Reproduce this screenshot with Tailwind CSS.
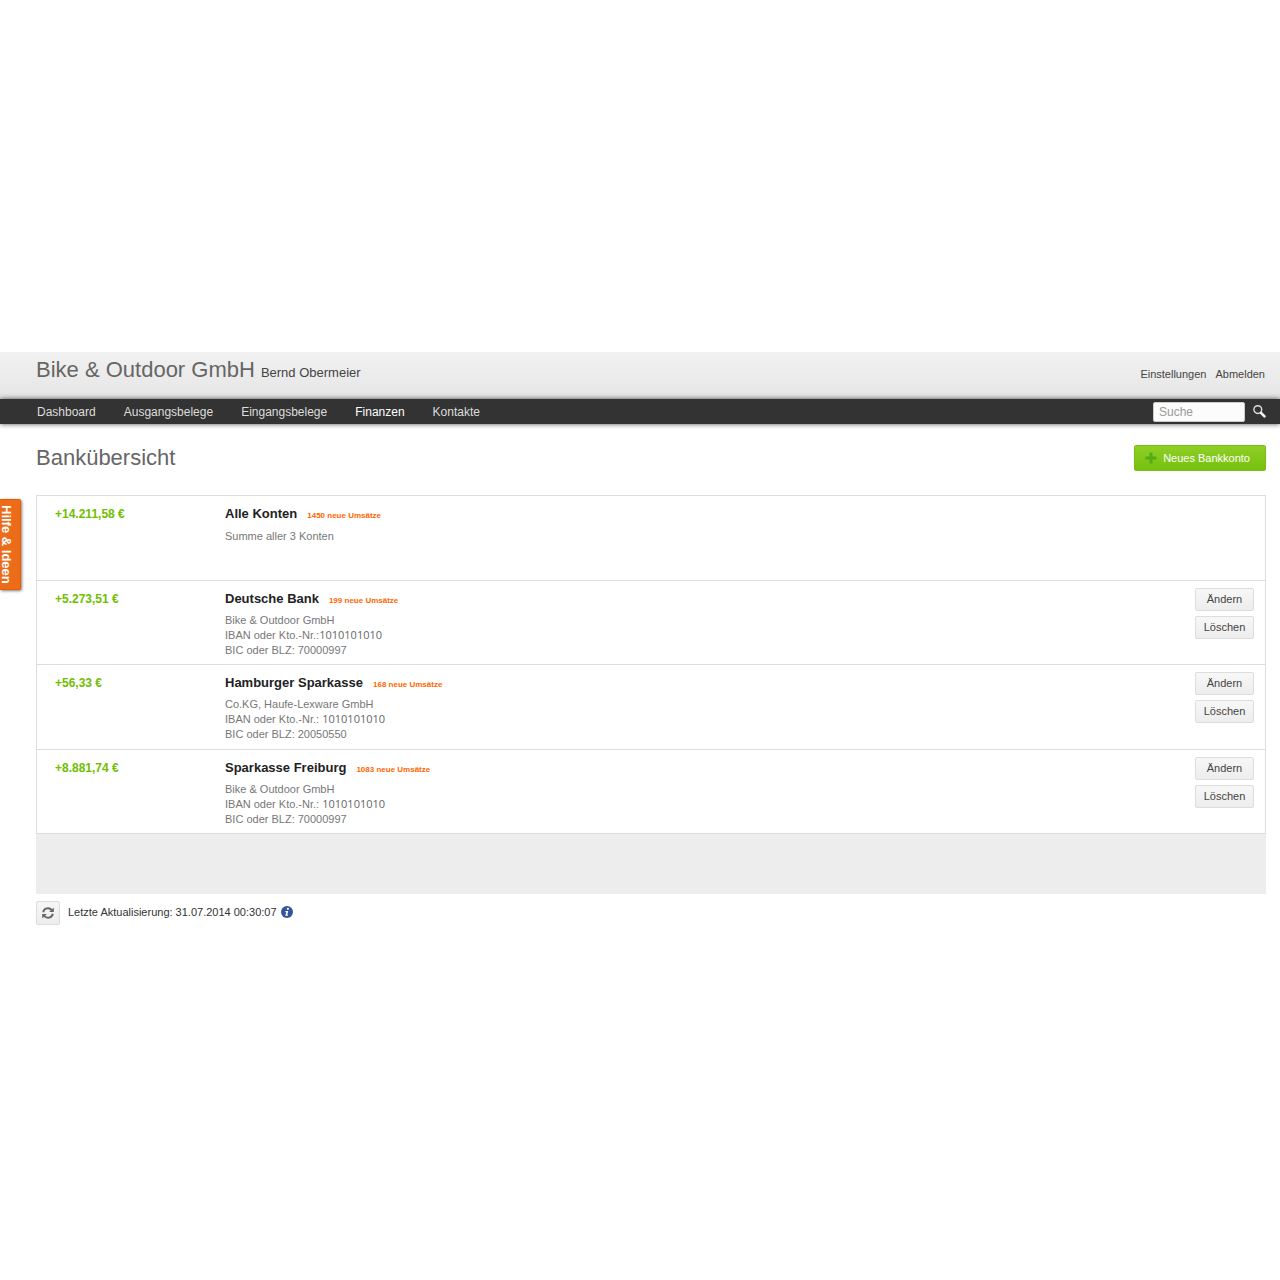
<!DOCTYPE html>
<html lang="de">
<head>
<meta charset="utf-8">
<meta name="viewport" content="width=device-width, initial-scale=1">
<title>Bankübersicht</title>
<script src="https://cdn.jsdelivr.net/npm/@tailwindcss/browser@4"></script>
</head>
<body class="min-h-screen bg-white pt-[352px] font-['Liberation_Sans',Arial,sans-serif] text-[11px] text-[#333]">
<div class="relative">
  <header class="flex h-[47px] items-start justify-between bg-linear-to-b from-[#f1f1f1] to-[#e6e6e6] pr-[15px] pl-9">
    <div class="flex items-baseline gap-[6px] pt-1">
      <span class="text-[22px] leading-7 text-[#666]">Bike &amp; Outdoor GmbH</span>
      <span class="text-[13px] text-[#444]">Bernd Obermeier</span>
    </div>
    <div class="flex gap-[9px] pt-[14px] leading-4 text-[#444]">
      <a href="#">Einstellungen</a>
      <a href="#">Abmelden</a>
    </div>
  </header>
  <nav class="relative flex h-[25px] items-center justify-between bg-[#333] pr-[14px] pl-[37px] shadow-[0_0_5px_rgba(0,0,0,0.7)]">
    <div class="flex gap-7 text-[12px] leading-4 text-[#ddd]">
      <a href="#">Dashboard</a>
      <a href="#">Ausgangsbelege</a>
      <a href="#">Eingangsbelege</a>
      <a href="#" class="text-white">Finanzen</a>
      <a href="#">Kontakte</a>
    </div>
    <form class="flex items-center gap-2">
      <input type="search" aria-label="Suche" placeholder="Suche" class="h-5 w-[92px] rounded-xs border border-[#ccc] bg-[#fcfcfc] px-[5px] text-[12px] placeholder:text-[#999]">
      <button type="button" aria-label="Suchen">
        <svg class="size-[13px]" viewBox="0 0 13 13" fill="none"><circle cx="4.8" cy="4.6" r="3.9" stroke="#e0e0e0" stroke-width="1.4"/><path d="M8 7.8 11.5 11.3" stroke="#f4f4f4" stroke-width="2.6" stroke-linecap="round"/></svg>
      </button>
    </form>
  </nav>
  <main class="pr-[14px] pl-9">
    <div class="flex items-center justify-between pt-[21px] pb-6">
      <h1 class="text-[22px] leading-[26px] text-[#666]">Bankübersicht</h1>
      <button type="button" class="flex h-[26px] items-center gap-[6px] rounded-xs border border-[#7cbd18] bg-linear-to-b from-[#8fcf26] to-[#76c00b] pr-[15px] pl-[10px] text-white">
        <svg class="size-3" viewBox="0 0 12 12"><path d="M4.5 0.5h3v4h4v3h-4v4h-3v-4h-4v-3h4z" fill="#55ab17"/></svg>
        Neues Bankkonto
      </button>
    </div>
    <ul class="border border-[#ddd] leading-[15px] text-[#777]">
      <li class="flex h-[84px] px-[18px] pt-[10px]">
        <strong class="w-[170px] shrink-0 text-[12px] leading-4 text-[#6fbe00]">+14.211,58 €</strong>
        <div class="grow">
          <h2 class="flex items-baseline gap-[10px] text-[13px] leading-4 font-bold text-[#222]">Alle Konten <a href="#" class="text-[8px] leading-none text-[#ff6600]">1450 neue Umsätze</a></h2>
          <p class="pt-[7px]">Summe aller 3 Konten</p>
        </div>
      </li>
      <li class="flex h-[84px] border-t border-[#ddd] pr-[11px] pl-[18px]">
        <strong class="w-[170px] shrink-0 pt-[10px] text-[12px] leading-4 text-[#6fbe00]">+5.273,51 €</strong>
        <div class="grow pt-[10px]">
          <h2 class="flex items-baseline gap-[10px] text-[13px] leading-4 font-bold text-[#222]">Deutsche Bank <a href="#" class="text-[8px] leading-none text-[#ff6600]">199 neue Umsätze</a></h2>
          <p class="pt-[6px]">Bike &amp; Outdoor GmbH<br>IBAN oder Kto.-Nr.:<span class="font-['Open_Sans',sans-serif] leading-none text-[#666]">1010101010</span><br>BIC oder BLZ: 70000997</p>
        </div>
        <div class="flex w-[59px] shrink-0 flex-col gap-[5px] pt-[7px] text-[#444]">
          <button type="button" class="h-[23px] rounded-xs border border-[#ddd] bg-linear-to-b from-[#f7f7f7] to-[#ededed]">Ändern</button>
          <button type="button" class="h-[23px] rounded-xs border border-[#ddd] bg-linear-to-b from-[#f7f7f7] to-[#ededed]">Löschen</button>
        </div>
      </li>
      <li class="flex h-[85px] border-t border-[#ddd] pr-[11px] pl-[18px]">
        <strong class="w-[170px] shrink-0 pt-[10px] text-[12px] leading-4 text-[#6fbe00]">+56,33 €</strong>
        <div class="grow pt-[10px]">
          <h2 class="flex items-baseline gap-[10px] text-[13px] leading-4 font-bold text-[#222]">Hamburger Sparkasse <a href="#" class="text-[8px] leading-none text-[#ff6600]">168 neue Umsätze</a></h2>
          <p class="pt-[6px]">Co.KG, Haufe-Lexware GmbH<br>IBAN oder Kto.-Nr.: <span class="font-['Open_Sans',sans-serif] leading-none text-[#666]">1010101010</span><br>BIC oder BLZ: 20050550</p>
        </div>
        <div class="flex w-[59px] shrink-0 flex-col gap-[5px] pt-[7px] text-[#444]">
          <button type="button" class="h-[23px] rounded-xs border border-[#ddd] bg-linear-to-b from-[#f7f7f7] to-[#ededed]">Ändern</button>
          <button type="button" class="h-[23px] rounded-xs border border-[#ddd] bg-linear-to-b from-[#f7f7f7] to-[#ededed]">Löschen</button>
        </div>
      </li>
      <li class="flex h-[84px] border-t border-[#ddd] pr-[11px] pl-[18px]">
        <strong class="w-[170px] shrink-0 pt-[10px] text-[12px] leading-4 text-[#6fbe00]">+8.881,74 €</strong>
        <div class="grow pt-[10px]">
          <h2 class="flex items-baseline gap-[10px] text-[13px] leading-4 font-bold text-[#222]">Sparkasse Freiburg <a href="#" class="text-[8px] leading-none text-[#ff6600]">1083 neue Umsätze</a></h2>
          <p class="pt-[6px]">Bike &amp; Outdoor GmbH<br>IBAN oder Kto.-Nr.: <span class="font-['Open_Sans',sans-serif] leading-none text-[#666]">1010101010</span><br>BIC oder BLZ: 70000997</p>
        </div>
        <div class="flex w-[59px] shrink-0 flex-col gap-[5px] pt-[7px] text-[#444]">
          <button type="button" class="h-[23px] rounded-xs border border-[#ddd] bg-linear-to-b from-[#f7f7f7] to-[#ededed]">Ändern</button>
          <button type="button" class="h-[23px] rounded-xs border border-[#ddd] bg-linear-to-b from-[#f7f7f7] to-[#ededed]">Löschen</button>
        </div>
      </li>
    </ul>
    <div class="h-[60px] bg-[#ededed]"></div>
    <div class="flex items-start pt-[7px]">
      <button type="button" aria-label="Aktualisieren" class="flex size-6 items-center justify-center rounded-xs border border-[#ddd] bg-linear-to-b from-[#f7f7f7] to-[#ededed]">
        <svg class="size-3" viewBox="0 0 12 12"><g fill="none" stroke="#666" stroke-width="1.9"><path d="M1.2 5.2A4.8 4.8 0 0 1 9.8 3.3"/><path d="M10.8 6.8A4.8 4.8 0 0 1 2.2 8.7"/></g><path d="M11.8 0.4v4.7H7.1zM0.2 11.6V6.9h4.7z" fill="#666"/></svg>
      </button>
      <p class="flex items-center gap-1 pt-[3px] pl-2 leading-4">Letzte Aktualisierung: 31.07.2014 00:30:07
        <svg class="size-3" viewBox="0 0 12 12" role="img" aria-label="Information"><circle cx="6" cy="6" r="6" fill="#33569b"/><circle cx="6.9" cy="2.8" r="1.1" fill="#fff"/><path d="M4.5 5h2.7L6.3 8.8h.8L6.9 9.7H4.3L5.2 5.9H4.3z" fill="#fff"/></svg>
      </p>
    </div>
  </main>
  <button type="button" class="absolute top-[147px] left-0 flex h-[91px] w-[21px] items-center justify-center rounded-r-xs border border-l-0 border-[#ee5a00] bg-[#ec6c1a] pr-[9px] text-[13px] leading-4 font-bold text-white shadow-[1px_1px_3px_rgba(0,0,0,0.5)] [writing-mode:vertical-rl]">Hilfe &amp; Ideen</button>
</div>
</body>
</html>
